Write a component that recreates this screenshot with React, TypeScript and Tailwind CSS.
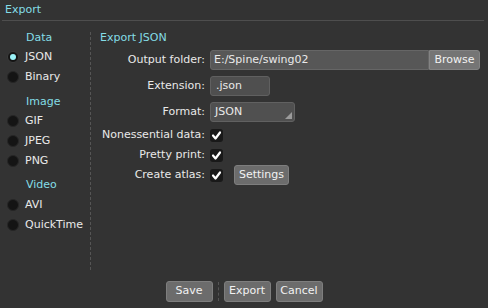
import React from "react";

const font = { fontFamily: '"DejaVu Sans", Verdana, sans-serif' };

const Radio = ({ label, checked }: { label: string; checked?: boolean }) => (
  <div className="flex items-center h-[20px] pl-[7px] gap-[6px]">
    <div
      className={
        "w-[12px] h-[12px] rounded-full flex items-center justify-center bg-[#141414] border " +
        (checked ? "border-[#3c3c3c]" : "border-[#262626]")
      }
    >
      {checked && <div className="w-[6px] h-[6px] rounded-full bg-[#9af2f8]" />}
    </div>
    <span>{label}</span>
  </div>
);

const Header = ({ children, className = "" }: { children: React.ReactNode; className?: string }) => (
  <div className={"h-[11px] leading-[11px] text-[#84dde6] pl-[26px] " + className}>{children}</div>
);

const Check = () => (
  <div className="w-[13px] h-[13px] rounded-[3px] bg-[#191919] flex items-center justify-center">
    <svg width="11" height="11" viewBox="0 0 11 11">
      <path d="M2 5.5 L4.5 8.5 L9 2.5" fill="none" stroke="#ffffff" strokeWidth="2.2" strokeLinecap="round" strokeLinejoin="round" />
    </svg>
  </div>
);

const Label = ({ children }: { children: React.ReactNode }) => (
  <div className="w-[119px] text-right pr-[5px] shrink-0 whitespace-nowrap">{children}</div>
);

const Btn = ({ children, className = "" }: { children: React.ReactNode; className?: string }) => (
  <div
    className={
      "h-[21px] flex items-center justify-center rounded-[3px] bg-[#6c6c6c] border border-[#7e7e7e] text-[#f2f2f2] " +
      className
    }
  >
    {children}
  </div>
);

export default function App() {
  return (
    <div style={font} className="w-[488px] h-[308px] bg-[#333333] text-[11px] text-[#e9e9e9] flex flex-col overflow-hidden">
      <div className="h-[20px] pt-[3px] pl-[5px] leading-[13px] text-[#84dde6]">Export</div>
      <div className="mx-[2px] h-px bg-[#4e4e4e] w-[482px]" />

      <div className="flex mt-[11px] h-[238px]">
        <div className="w-[91px] border-r border-dashed border-[#555555] flex flex-col">
          <Header>Data</Header>
          <div className="mt-[4px]">
            <Radio label="JSON" checked />
            <Radio label="Binary" />
          </div>
          <Header className="mt-[9px]">Image</Header>
          <div className="mt-[4px]">
            <Radio label="GIF" />
            <Radio label="JPEG" />
            <Radio label="PNG" />
          </div>
          <Header className="mt-[8px]">Video</Header>
          <div className="mt-[5px]">
            <Radio label="AVI" />
            <Radio label="QuickTime" />
          </div>
        </div>

        <div className="flex-1 flex flex-col">
          <div className="h-[11px] leading-[11px] pl-[9px] text-[#84dde6]">Export JSON</div>

          <div className="flex items-center mt-[7px] h-[20px]">
            <Label>Output folder:</Label>
            <div className="flex h-[20px]">
              <div className="w-[219px] h-[20px] bg-[#575757] border border-[#666666] rounded-l-[3px] pl-[3px] flex items-center">
                E:/Spine/swing02
              </div>
              <div className="w-[51px] h-[20px] bg-[#757575] border border-[#838383] rounded-r-[3px] flex items-center justify-center text-[#f2f2f2]">
                Browse
              </div>
            </div>
          </div>

          <div className="flex items-center mt-[6px] h-[20px]">
            <Label>Extension:</Label>
            <div className="w-[60px] h-[20px] bg-[#4f4f4f] border border-[#606060] rounded-[3px] pl-[5px] flex items-center">
              .json
            </div>
          </div>

          <div className="flex items-center mt-[6px] h-[20px]">
            <Label>Format:</Label>
            <div className="relative w-[85px] h-[20px] bg-[#505050] border border-[#616161] rounded-[3px] pl-[4px] flex items-center">
              JSON
              <svg className="absolute right-[2px] bottom-[2px]" width="7" height="7" viewBox="0 0 7 7">
                <polygon points="7,0 7,7 0,7" fill="#9b9b9b" />
              </svg>
            </div>
          </div>

          <div className="flex items-center mt-[3px] h-[20px]">
            <Label>Nonessential data:</Label>
            <Check />
          </div>
          <div className="flex items-center h-[20px]">
            <Label>Pretty print:</Label>
            <Check />
          </div>
          <div className="flex items-center h-[20px]">
            <Label>Create atlas:</Label>
            <Check />
            <Btn className="w-[55px] ml-[11px] !h-[20px]">Settings</Btn>
          </div>
        </div>
      </div>

      <div className="flex justify-center items-center mt-[11px] h-[21px]">
        <Btn className="w-[47px]">Save</Btn>
        <div className="h-[19px] mx-[5px] border-l border-dashed border-[#555555]" />
        <Btn className="w-[47px]">Export</Btn>
        <Btn className="w-[47px] ml-[5px]">Cancel</Btn>
      </div>
    </div>
  );
}
